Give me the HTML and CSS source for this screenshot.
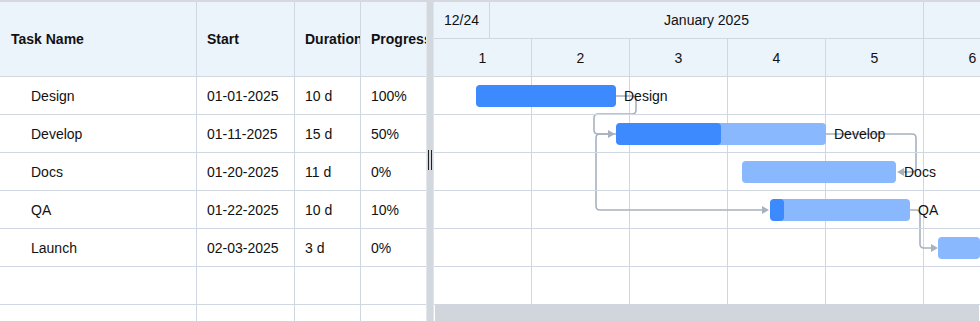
FILE: index.html
```html
<!DOCTYPE html>
<html lang="en">
<head>
  <meta charset="UTF-8">
  <title>Project Gantt</title>
  <meta name="viewport" content="width=device-width, initial-scale=1.0">
  <link rel="stylesheet" href="styles.css">
</head>
<body>

<div class="gantt-wrap">

  <div class="task-grid">
    <div class="head cell">Task Name</div>
    <div class="head cell">Start</div>
    <div class="head cell">Duration</div>
    <div class="head cell last">Progress</div>

    <div class="cell name">Design</div>
    <div class="cell">01-01-2025</div>
    <div class="cell">10 d</div>
    <div class="cell last">100%</div>

    <div class="cell name">Develop</div>
    <div class="cell">01-11-2025</div>
    <div class="cell">15 d</div>
    <div class="cell last">50%</div>

    <div class="cell name">Docs</div>
    <div class="cell">01-20-2025</div>
    <div class="cell">11 d</div>
    <div class="cell last">0%</div>

    <div class="cell name">QA</div>
    <div class="cell">01-22-2025</div>
    <div class="cell">10 d</div>
    <div class="cell last">10%</div>

    <div class="cell name">Launch</div>
    <div class="cell">02-03-2025</div>
    <div class="cell">3 d</div>
    <div class="cell last">0%</div>

    <div class="cell"></div><div class="cell"></div><div class="cell"></div><div class="cell last"></div>
    <div class="cell"></div><div class="cell"></div><div class="cell"></div><div class="cell last"></div>
  </div>

  <div class="splitter"><span class="grip"></span></div>

  <div class="chart">
    <div class="scale months">
      <div class="scale-cell m-dec">12/24</div>
      <div class="scale-cell m-jan">January 2025</div>
      <div class="scale-cell m-feb"></div>
    </div>
    <div class="scale weeks">
      <div class="scale-cell wk">1</div>
      <div class="scale-cell wk">2</div>
      <div class="scale-cell wk">3</div>
      <div class="scale-cell wk">4</div>
      <div class="scale-cell wk">5</div>
      <div class="scale-cell wk">6</div>
    </div>

    <div class="chart-body">
      <!-- dependency links -->
      <svg class="links" width="546" height="228" viewBox="0 0 546 228">
        <g fill="none" stroke="#a7b1bf" stroke-width="1.6">
          <path d="M182,19 H198 Q202,19 202,23 V33 Q202,37 198,37 H164 Q160,37 160,41 V53 Q160,57 164,57 H175"/>
          <path d="M182,57 H166 Q162,57 162,61 V129 Q162,133 166,133 H329"/>
          <path d="M392,57 H478 Q482,57 482,61 V91 Q482,95 478,95 H468"/>
          <path d="M476,133 H482 Q486,133 486,137 V167 Q486,171 490,171 H498"/>
        </g>
        <g fill="#a7b1bf">
          <polygon points="174,53 181,57 174,61"/>
          <polygon points="328,129 335,133 328,137"/>
          <polygon points="470,91 463,95 470,99"/>
          <polygon points="497,167 504,171 497,175"/>
        </g>
      </svg>

      <div class="row">
        <div class="bar done" style="left:42px; width:140px;"></div>
        <span class="label" style="left:190px;">Design</span>
      </div>
      <div class="row">
        <div class="bar" style="left:182px; width:210px;"><div class="progress" style="width:105px;"></div></div>
        <span class="label" style="left:400px;">Develop</span>
      </div>
      <div class="row">
        <div class="bar" style="left:308px; width:154px;"></div>
        <span class="label" style="left:470px;">Docs</span>
      </div>
      <div class="row">
        <div class="bar" style="left:336px; width:140px;"><div class="progress" style="width:14px;"></div></div>
        <span class="label" style="left:484px;">QA</span>
      </div>
      <div class="row">
        <div class="bar" style="left:504px; width:42px;"></div>
      </div>
      <div class="row"></div>
    </div>

    <div class="hscroll"></div>
  </div>

</div>

</body>
</html>
```

FILE: styles.css
```css
body {
  margin: 0;
  font-family: "Liberation Sans", Arial, sans-serif;
  font-size: 14px;
  color: #111;
  background: #fff;
  overflow: hidden;
}

.gantt-wrap {
  display: flex;
  height: 321px;
  border-top: 2px solid #d5d9df;
  box-sizing: border-box;
  overflow: hidden;
}

/* left grid */

.task-grid {
  display: grid;
  grid-template-columns: 197px 98px 66px 65px;
  grid-template-rows: 75px;
  grid-auto-rows: 38px;
  align-content: start;
  flex: none;
  width: 426px;
  overflow: hidden;
}

.cell {
  display: flex;
  align-items: center;
  padding: 0 10px;
  border-right: 1px solid #d0d7e1;
  border-bottom: 1px solid #d0d7e1;
  box-sizing: border-box;
  white-space: nowrap;
  overflow: hidden;
}

.cell.last {
  border-right: none;
}

.cell.name {
  padding-left: 31px;
}

.head {
  background: #ebf3fb;
  font-weight: bold;
}

.head:first-child {
  padding-left: 11px;
}

/* splitter */

.splitter {
  flex: none;
  width: 7px;
  background: #d3d8df;
  border-left: 1px solid #e4e7eb;
  box-sizing: border-box;
  display: flex;
  align-items: center;
  justify-content: center;
}

.grip {
  width: 4px;
  height: 20px;
  margin-top: -3px;
  border-left: 1px solid #222;
  border-right: 1px solid #222;
  box-sizing: border-box;
}

/* chart */

.chart {
  flex: 1;
  min-width: 0;
  border-left: 1px solid #e1e5ea;
  overflow: hidden;
}

.scale {
  display: flex;
  background: #ebf3fb;
  border-bottom: 1px solid #d0d7e1;
  box-sizing: border-box;
}

.months {
  height: 37px;
}

.weeks {
  height: 38px;
}

.scale-cell {
  flex: none;
  display: flex;
  align-items: center;
  justify-content: center;
  border-right: 1px solid #d0d7e1;
  box-sizing: border-box;
}

.m-dec { width: 56px; }
.m-jan { width: 434px; }
.m-feb { width: 98px; }
.wk { width: 98px; }

.chart-body {
  position: relative;
  width: 588px;
  background-image: linear-gradient(to right, transparent 97px, #d0d7e1 97px);
  background-size: 98px 100%;
}

.links {
  position: absolute;
  top: 0;
  left: 0;
  z-index: 0;
}

.row {
  position: relative;
  height: 38px;
  border-bottom: 1px solid #d0d7e1;
  box-sizing: border-box;
}

.bar {
  position: absolute;
  top: 8px;
  height: 22px;
  border-radius: 4px;
  background: #89b8ff;
  overflow: hidden;
  z-index: 1;
}

.bar.done {
  background: #3c8afd;
}

.progress {
  height: 100%;
  border-radius: 4px;
  background: #3c8afd;
}

.label {
  position: absolute;
  top: 0;
  line-height: 38px;
  z-index: 2;
  white-space: nowrap;
}

.hscroll {
  height: 17px;
  margin-left: 1px;
  width: 544px;
  background: #d1d6dd;
}
```
